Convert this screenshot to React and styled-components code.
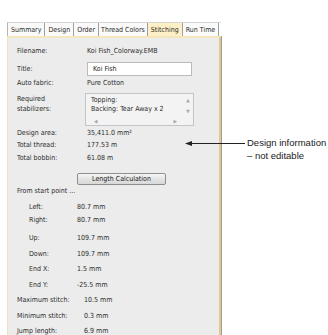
import React from "react";
import styled, { createGlobalStyle } from "styled-components";

const Global = createGlobalStyle`
  html, body { margin: 0; padding: 0; background: #ffffff; }
  body { font-family: "DejaVu Sans Condensed", "DejaVu Sans", sans-serif; }
`;

const Page = styled.div`
  position: relative;
  width: 328px;
  height: 335px;
  overflow: hidden;
  padding: 22px 0 0 7px;
  box-sizing: border-box;
`;

const Dialog = styled.div`
  width: 214px;
  display: flex;
  flex-direction: column;
`;

const TabBar = styled.div`
  display: flex;
  height: 13px;
  border-top: 1px solid #d4d4d4;
  border-left: 1px solid #b5b5b5;
`;

const Tab = styled.div`
  display: flex;
  align-items: center;
  padding: 0 ${(p) => p.$pad || 3}px;
  font-size: 7px;
  color: #2a2a2a;
  background: ${(p) => (p.$active ? "#fdf0c6" : "#fafafa")};
  border-right: 1px solid #9f9f9f;
  white-space: nowrap;
`;

const Panel = styled.div`
  height: 320px;
  background: #ececec;
  border-top: 2px solid #f4e7bd;
  border-left: 1px solid #f1e3b8;
  border-right: 2px solid #e2c88e;
  box-shadow: 1px 0 0 #9c9c9c;
  padding: 6px 0 0 9px;
  display: flex;
  flex-direction: column;
  box-sizing: border-box;
`;

const Row = styled.div`
  display: flex;
  align-items: center;
  height: ${(p) => p.$h || 12}px;
  margin-top: ${(p) => p.$gap || 0}px;
  padding-left: ${(p) => p.$indent || 0}px;
  font-size: 7px;
  color: #2b2b2b;
`;

const Label = styled.div`
  width: ${(p) => p.$w || 70}px;
  flex: none;
`;

const Value = styled.div`
  white-space: nowrap;
`;

const TextInput = styled.div`
  width: 105px;
  height: 14px;
  box-sizing: border-box;
  border: 1px solid #b9bbc1;
  background: #ffffff;
  display: flex;
  align-items: center;
  padding-left: 5px;
  font-size: 7px;
  color: #222;
`;

const StabRow = styled.div`
  display: flex;
  margin-top: ${(p) => p.$gap || 0}px;
  font-size: 7px;
  color: #2b2b2b;
`;

const StackLabel = styled.div`
  width: 68px;
  flex: none;
  padding-top: 1px;
  line-height: 10px;
`;

const ListBox = styled.div`
  width: 109px;
  height: 33px;
  box-sizing: border-box;
  border: 1px solid #c2c4c8;
  background: #f3f3f3;
  display: grid;
  grid-template-columns: 1fr 10px;
  grid-template-rows: 1fr 9px;
`;

const ListText = styled.div`
  padding: 2px 0 0 5px;
  line-height: 9px;
  font-size: 7px;
  color: #2b2b2b;
  white-space: nowrap;
  overflow: hidden;
`;

const VScroll = styled.div`
  display: flex;
  flex-direction: column;
  justify-content: space-between;
  align-items: center;
  padding: 3px 0 2px;
  font-size: 5px;
  color: #a8a8a8;
`;

const HScroll = styled.div`
  display: flex;
  justify-content: space-between;
  align-items: center;
  padding: 0 6px 0 8px;
  font-size: 5px;
  color: #a8a8a8;
`;

const Corner = styled.div``;

const Button = styled.div`
  margin-top: ${(p) => p.$gap || 0}px;
  margin-left: 60px;
  width: 89px;
  height: 12px;
  box-sizing: border-box;
  border: 1px solid #8e8e8e;
  border-radius: 2px;
  background: linear-gradient(#f6f6f6, #e4e4e4 50%, #d8d8d8);
  display: flex;
  align-items: center;
  justify-content: center;
  font-size: 7px;
  color: #222;
`;

const Callout = styled.div`
  position: absolute;
  left: 185px;
  top: 137px;
  display: flex;
  align-items: flex-start;
`;

const Arrow = styled.svg`
  margin-top: 2px;
  flex: none;
`;

const CalloutText = styled.div`
  font-family: "Liberation Sans", Arial, sans-serif;
  font-size: 9.5px;
  line-height: 13px;
  color: #1a1a1a;
  margin-left: 2px;
  margin-top: -1px;
`;

const rowsTop = [
  { label: "Design area:", value: "35,411.0 mm²", gap: 1 },
  { label: "Total thread:", value: "177.53 m", gap: 0 },
  { label: "Total bobbin:", value: "61.08 m", gap: 1 },
];

const startRows = [
  { label: "Left:", value: "80.7 mm", gap: 4 },
  { label: "Right:", value: "80.7 mm", gap: 1 },
  { label: "Up:", value: "109.7 mm", gap: 6 },
  { label: "Down:", value: "109.7 mm", gap: 4 },
  { label: "End X:", value: "1.5 mm", gap: 3 },
  { label: "End Y:", value: "-25.5 mm", gap: 4 },
];

const stitchRows = [
  { label: "Maximum stitch:", value: "10.5 mm", gap: 3 },
  { label: "Minimum stitch:", value: "0.3 mm", gap: 4 },
  { label: "Jump length:", value: "6.9 mm", gap: 3 },
];

const tabs = [
  { t: "Summary", pad: 3 },
  { t: "Design", pad: 3 },
  { t: "Order", pad: 3 },
  { t: "Thread Colors", pad: 2 },
  { t: "Stitching", pad: 3, active: true },
  { t: "Run Time", pad: 3 },
];

export default function App() {
  return (
    <>
      <Global />
      <Page>
        <Dialog>
          <TabBar>
            {tabs.map((tb) => (
              <Tab key={tb.t} $active={tb.active} $pad={tb.pad}>
                {tb.t}
              </Tab>
            ))}
          </TabBar>
          <Panel>
            <Row $h={14}>
              <Label>Filename:</Label>
              <Value>Koi Fish_Colorway.EMB</Value>
            </Row>
            <Row $h={14} $gap={4}>
              <Label>Title:</Label>
              <TextInput>Koi Fish</TextInput>
            </Row>
            <Row $h={14}>
              <Label>Auto fabric:</Label>
              <Value>Pure Cotton</Value>
            </Row>
            <StabRow $gap={3}>
              <StackLabel>
                Required
                <br />
                stabilizers:
              </StackLabel>
              <ListBox>
                <ListText>
                  Topping:
                  <br />
                  Backing: Tear Away x 2
                </ListText>
                <VScroll>
                  <span>▲</span>
                  <span>▼</span>
                </VScroll>
                <HScroll>
                  <span>◀</span>
                  <span>▶</span>
                </HScroll>
                <Corner />
              </ListBox>
            </StabRow>
            {rowsTop.map((r) => (
              <Row key={r.label} $gap={r.gap}>
                <Label>{r.label}</Label>
                <Value>{r.value}</Value>
              </Row>
            ))}
            <Button $gap={9}>Length Calculation</Button>
            <Row>
              <Value>From start point ...</Value>
            </Row>
            {startRows.map((r) => (
              <Row key={r.label} $gap={r.gap} $indent={12}>
                <Label $w={48}>{r.label}</Label>
                <Value>{r.value}</Value>
              </Row>
            ))}
            {stitchRows.map((r) => (
              <Row key={r.label} $gap={r.gap}>
                <Label $w={67}>{r.label}</Label>
                <Value>{r.value}</Value>
              </Row>
            ))}
          </Panel>
        </Dialog>
        <Callout>
          <Arrow width="60" height="9" viewBox="0 0 60 9">
            <line x1="3" y1="4.5" x2="60" y2="4.5" stroke="#222" strokeWidth="1" />
            <path d="M0 4.5 L7 2 L7 7 Z" fill="#222" />
          </Arrow>
          <CalloutText>
            Design information
            <br />– not editable
          </CalloutText>
        </Callout>
      </Page>
    </>
  );
}
